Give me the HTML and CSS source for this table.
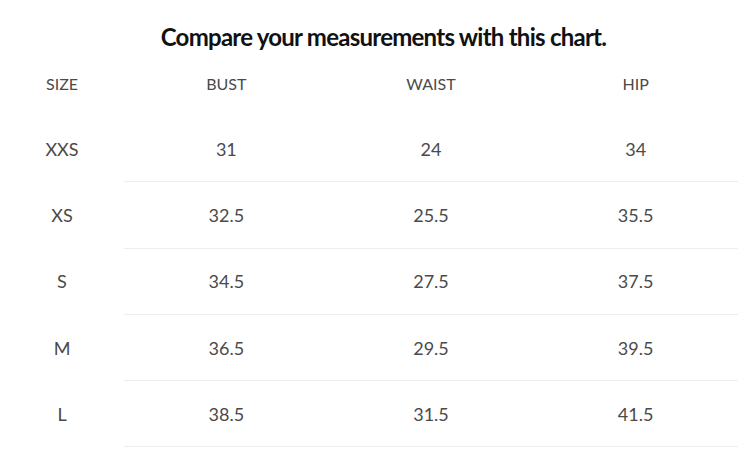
FILE: index.html
```html
<!DOCTYPE html>
<html>
<head>
<meta charset="utf-8">
<link rel="stylesheet" href="styles.css">
</head>
<body>
<div class="chart">
  <h1 class="title">Compare your measurements with this chart.</h1>
  <table class="sizes">
    <thead>
      <tr><th>SIZE</th><th>BUST</th><th>WAIST</th><th>HIP</th></tr>
    </thead>
    <tbody>
      <tr><td>XXS</td><td>31</td><td>24</td><td>34</td></tr>
      <tr><td>XS</td><td>32.5</td><td>25.5</td><td>35.5</td></tr>
      <tr><td>S</td><td>34.5</td><td>27.5</td><td>37.5</td></tr>
      <tr><td>M</td><td>36.5</td><td>29.5</td><td>39.5</td></tr>
      <tr><td>L</td><td>38.5</td><td>31.5</td><td>41.5</td></tr>
    </tbody>
  </table>
</div>
</body>
</html>
```
FILE: styles.css
```css
html, body {
  margin: 0;
  padding: 0;
  background: #fff;
}
.chart {
  width: 738px;
  font-family: Lato, "Liberation Sans", sans-serif;
  color: #4a4a4a;
}
.title {
  margin: 0;
  padding: 23px 0 0 29px;
  line-height: 28px;
  height: 51px;
  box-sizing: border-box;
  text-align: center;
  font-size: 24px;
  font-weight: 700;
  letter-spacing: -0.75px;
  color: #111;
}
.sizes {
  width: 738px;
  border-collapse: collapse;
  table-layout: fixed;
}
.sizes th, .sizes td {
  height: 65.3px;
  padding: 0;
  text-align: center;
  vertical-align: middle;
  font-size: 18px;
  font-weight: 400;
}
.sizes th {
  height: 65px;
  font-size: 16px;
}
.sizes th:first-child, .sizes td:first-child {
  width: 124px;
}
.sizes td + td {
  border-bottom: 1px solid #eee;
}
```
